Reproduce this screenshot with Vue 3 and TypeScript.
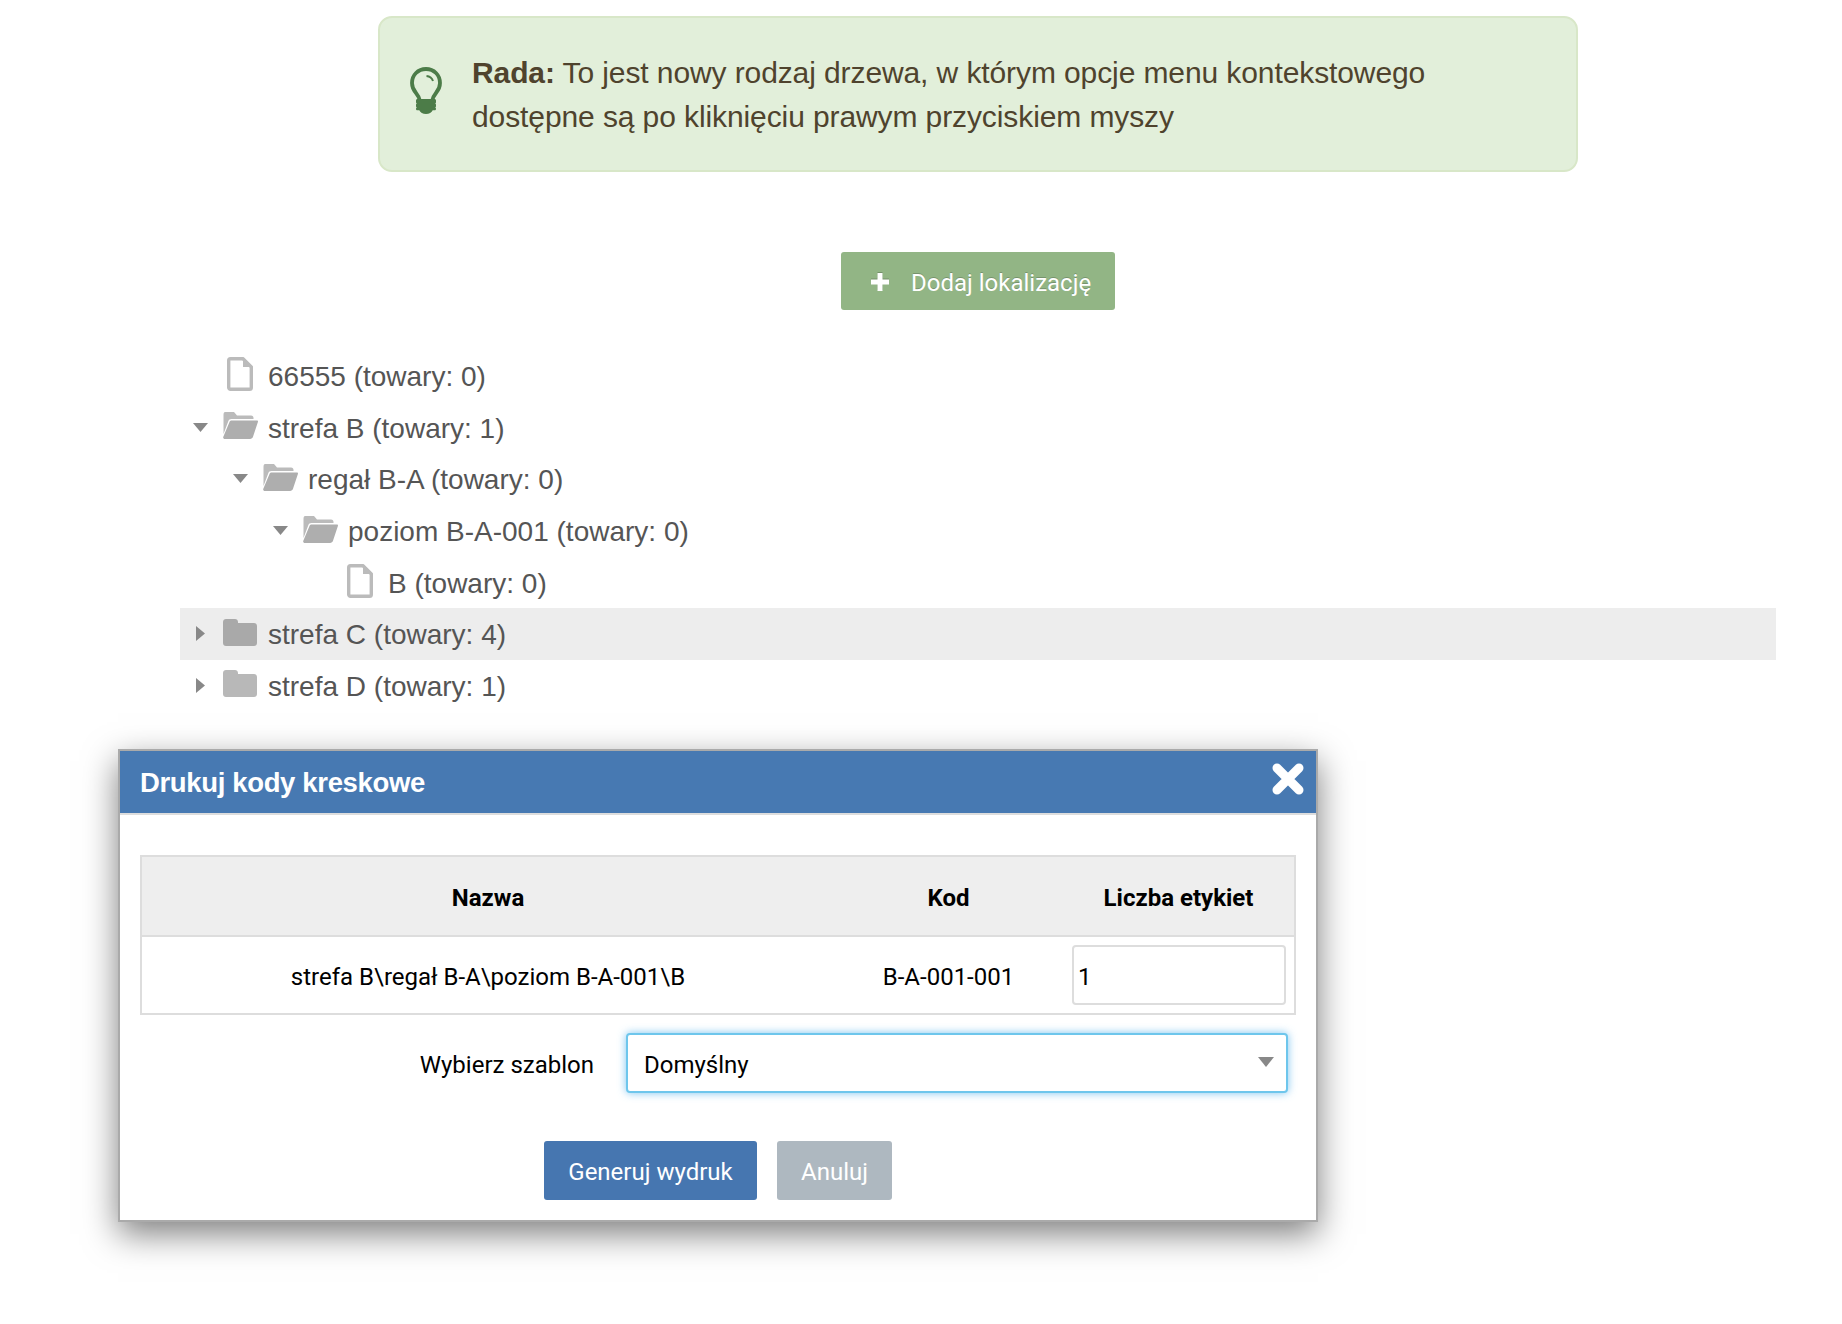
<script setup lang="ts">
interface TreeRow {
  label: string
  depth: number
  kind: 'file' | 'open' | 'closed'
  highlighted?: boolean
}

const rows: TreeRow[] = [
  { label: '66555 (towary: 0)', depth: 0, kind: 'file' },
  { label: 'strefa B (towary: 1)', depth: 0, kind: 'open' },
  { label: 'regał B-A (towary: 0)', depth: 1, kind: 'open' },
  { label: 'poziom B-A-001 (towary: 0)', depth: 2, kind: 'open' },
  { label: 'B (towary: 0)', depth: 3, kind: 'file' },
  { label: 'strefa C (towary: 4)', depth: 0, kind: 'closed', highlighted: true },
  { label: 'strefa D (towary: 1)', depth: 0, kind: 'closed' },
]

const indent = (depth: number) => ({ paddingLeft: `${depth * 40}px` })
</script>

<template>
  <div class="page">
    <div class="top">
      <div class="alert">
        <svg class="bulb" width="32" height="48" viewBox="0 0 32 48">
          <path d="M16 2C8 2 2 8 2 16c0 4 1.500 7 4 10 2 2.500 3.500 5 4 8h12c.5-3 2-5.500 4-8 2.500-3 4-6 4-10C30 8 24 2 16 2z" fill="none" stroke="#4c7c48" stroke-width="3.800" />
          <path d="M16.500 9c3 .3 5.500 2 6.500 5" fill="none" stroke="#4c7c48" stroke-width="2" />
          <path d="M7.500 32h17c.9 0 1.500.6 1.500 1.500v1.800c0 .6-.3 1-.8 1.200.5.200.8.600.8 1.200v1.600c0 .6-.3 1-.8 1.200.5.200.8.600.8 1.200 0 1-.6 1.500-1.500 1.500h-1.800c-1 2-3.500 3.800-6.700 3.800s-5.700-1.800-6.700-3.800H7.500c-.9 0-1.500-.5-1.500-1.500 0-.6.300-1 .8-1.200-.5-.2-.8-.6-.8-1.200v-1.600c0-.6.300-1 .8-1.200-.5-.2-.8-.6-.8-1.200v-1.800c0-.9.600-1.500 1.500-1.500z" fill="#4c7c48" />
        </svg>
        <p class="alert-text"><strong>Rada:</strong> To jest nowy rodzaj drzewa, w którym opcje menu kontekstowego dostępne są po kliknięciu prawym przyciskiem myszy</p>
      </div>
      <button class="add" type="button">
        <svg class="plus" width="18" height="18" viewBox="0 0 18 18">
          <path d="M6.500 0h5v6.500H18v5h-6.500V18h-5v-6.500H0v-5h6.500z" fill="#fff" />
        </svg>
        <span>Dodaj lokalizację</span>
      </button>
    </div>

    <ul class="tree">
      <li v-for="row in rows" :key="row.label" class="row" :class="{ hl: row.highlighted }">
        <div class="row-inner" :style="indent(row.depth)">
          <span class="caret">
            <svg v-if="row.kind === 'open'" width="15" height="9" viewBox="0 0 15 9"><path d="M0 0h15L7.500 9z" fill="#888" /></svg>
            <svg v-else-if="row.kind === 'closed'" width="9" height="15" viewBox="0 0 9 15"><path d="M0 0l9 7.500L0 15z" fill="#888" /></svg>
          </span>
          <span class="icon">
            <svg v-if="row.kind === 'file'" width="26" height="34" viewBox="0 0 26 34">
              <path d="M3.500 1.700H16L24.300 10v20.500a1.800 1.800 0 0 1-1.800 1.800h-19a1.800 1.800 0 0 1-1.800-1.800v-27a1.800 1.800 0 0 1 1.800-1.800z" fill="#fff" stroke="#bbb" stroke-width="3.400" stroke-linejoin="round" />
              <path d="M16 0l10 10H16z" fill="#bbb" />
            </svg>
            <svg v-else-if="row.kind === 'open'" width="36" height="27" viewBox="0 0 36 27">
              <path d="M3 0h9l3 3.500h14c1.700 0 2.500 1 2.500 2.500v1H9.500C7.800 7 6.800 7.800 6.300 9.200L1.500 22V3c0-1.700.6-3 1.500-3z" fill="#bbb" />
              <path d="M9.500 8.500H35c.8 0 1.200.7.900 1.400L31 24.800c-.5 1.300-1.500 2.200-3 2.200H3c-1.500 0-2.200-1-1.700-2.300L7.500 10c.4-1 1-1.500 2-1.500z" fill="#aeaeae" />
            </svg>
            <svg v-else width="34" height="27" viewBox="0 0 34 27">
              <path d="M3 0h9c1.700 0 3 1.300 3 3v1h16c1.700 0 3 1.300 3 3v17c0 1.700-1.300 3-3 3H3c-1.700 0-3-1.300-3-3V3c0-1.700 1.300-3 3-3z" :fill="row.highlighted ? '#a9a9a9' : '#b8b8b8'" />
            </svg>
          </span>
          <span class="label">{{ row.label }}</span>
        </div>
      </li>
    </ul>

    <section class="modal">
      <header class="modal-head">
        <h2>Drukuj kody kreskowe</h2>
        <svg class="close" width="34" height="34" viewBox="0 0 34 34">
          <path d="M6 6l22 22M28 6L6 28" stroke="#fff" stroke-width="9" stroke-linecap="round" fill="none" />
        </svg>
      </header>
      <div class="modal-body">
        <table class="codes">
          <thead>
            <tr>
              <th class="c1">Nazwa</th>
              <th class="c2">Kod</th>
              <th class="c3">Liczba etykiet</th>
            </tr>
          </thead>
          <tbody>
            <tr>
              <td>strefa B\regał B-A\poziom B-A-001\B</td>
              <td>B-A-001-001</td>
              <td class="input-cell"><input class="count" type="text" value="1" /></td>
            </tr>
          </tbody>
        </table>
        <div class="template">
          <label class="template-label" for="tpl">Wybierz szablon</label>
          <div class="select-wrap">
            <select id="tpl" class="select"><option>Domyślny</option></select>
            <svg class="select-caret" width="16" height="10" viewBox="0 0 16 10"><path d="M0 0h16L8 10z" fill="#888" /></svg>
          </div>
        </div>
        <div class="actions">
          <button class="btn primary" type="button">Generuj wydruk</button>
          <button class="btn muted" type="button">Anuluj</button>
        </div>
      </div>
    </section>
  </div>
</template>

<style scoped>
.page {
  position: relative;
  width: 1842px;
  height: 1324px;
  padding-top: 16px;
  box-sizing: border-box;
  font-family: "Liberation Sans", Arial, sans-serif;
  background: #fff;
}
.top {
  width: 1200px;
  margin-left: 378px;
  display: flex;
  flex-direction: column;
  align-items: center;
}
.alert {
  box-sizing: border-box;
  width: 100%;
  height: 156px;
  display: flex;
  align-items: center;
  padding-left: 30px;
  background: #e2efda;
  border: 2px solid #d8e7c8;
  border-radius: 14px;
}
.bulb {
  flex: none;
  margin-right: 30px;
  margin-top: -6px;
}
.alert-text {
  margin: 0;
  padding-top: 2px;
  width: 1000px;
  font-size: 30px;
  line-height: 44px;
  color: #4f432d;
  letter-spacing: -0.1px;
}
.add {
  margin-top: 80px;
  width: 274px;
  height: 58px;
  display: flex;
  align-items: center;
  padding: 0 0 0 30px;
  border: 0;
  border-radius: 3px;
  background: #92b585;
  color: #fff;
  font-family: Roboto, sans-serif;
  font-size: 24px;
  text-shadow: 0 -1px 0 rgba(0, 0, 0, 0.2);
}
.add span {
  padding-top: 4px;
}
.plus {
  margin-right: 22px;
  margin-top: 2px;
  filter: drop-shadow(0 -1px 0 rgba(0, 0, 0, 0.2));
}
.tree {
  list-style: none;
  margin: 40px 0 0 180px;
  padding: 0;
  width: 1596px;
}
.row {
  height: 51.6px;
}
.row.hl {
  background: #ededed;
}
.row-inner {
  height: 100%;
  display: flex;
  align-items: center;
  color: #555;
  font-size: 28px;
}
.label {
  padding-top: 3px;
}
.caret {
  width: 41px;
  flex: none;
  display: flex;
  justify-content: center;
  box-sizing: border-box;
}
.icon {
  width: 36px;
  flex: none;
  display: flex;
  justify-content: center;
  margin-left: 1px;
  margin-right: 10px;
  margin-top: -3px;
}
.modal {
  position: absolute;
  left: 118px;
  top: 749px;
  box-sizing: border-box;
  width: 1200px;
  height: 473px;
  background: #fff;
  border: 2px solid #aaa;
  box-shadow: 0 12px 32px rgba(0, 0, 0, 0.5);
}
.modal-head {
  height: 62px;
  display: flex;
  align-items: center;
  justify-content: space-between;
  background: #4779b2;
  border-bottom: 2px solid #ddd;
  padding: 0 11px 0 20px;
  box-sizing: content-box;
}
.modal-head h2 {
  margin: 0;
  padding-top: 2px;
  color: #fff;
  font-size: 27.5px;
  font-weight: 700;
  letter-spacing: -0.35px;
}
.close {
  margin-top: -6px;
}
.modal-body {
  padding: 40px 20px 0 20px;
  font-family: Roboto, sans-serif;
  color: #000;
  font-size: 24px;
}
.codes {
  width: 1156px;
  box-sizing: border-box;
  table-layout: fixed;
  border-collapse: separate;
  border-spacing: 0;
  border: 2px solid #ddd;
}
.codes th {
  height: 80px;
  padding: 3px 0 0;
  box-sizing: border-box;
  background: #eee;
  border-bottom: 2px solid #ddd;
  font-weight: 700;
  text-align: center;
}
.c1 { width: 692px; }
.c2 { width: 229px; }
.codes td {
  height: 76px;
  box-sizing: border-box;
  padding: 3px 0 0;
  text-align: center;
}
.codes .input-cell {
  text-align: left;
  padding: 0 0 0 9px;
}
.count {
  display: block;
  box-sizing: border-box;
  width: 214px;
  height: 60px;
  padding: 3px 4px 0;
  border: 2px solid #ddd;
  border-radius: 4px;
  font-family: inherit;
  font-size: 24px;
  color: #000;
  background: #fff;
}
.template {
  display: flex;
  align-items: center;
  margin-top: 18px;
}
.template-label {
  width: 454px;
  padding-top: 3px;
  text-align: right;
  margin-right: 32px;
  flex: none;
}
.select-wrap {
  position: relative;
  width: 662px;
}
.select {
  display: block;
  box-sizing: border-box;
  width: 100%;
  height: 60px;
  padding: 3px 16px 0;
  appearance: none;
  background: #fff;
  border: 2px solid #6ec6ec;
  border-radius: 4px;
  box-shadow: 0 0 9px rgba(82, 178, 236, 0.75);
  font-family: inherit;
  font-size: 24px;
  color: #000;
  outline: none;
}
.select-caret {
  position: absolute;
  right: 14px;
  top: 24px;
}
.actions {
  display: flex;
  margin-top: 48px;
  margin-left: 404px;
  gap: 20px;
}
.btn {
  height: 59px;
  border: 0;
  border-radius: 3px;
  color: #fff;
  font-family: inherit;
  font-size: 24px;
  padding: 2px 0 0;
}
.primary {
  width: 213px;
  background: #4676b0;
}
.muted {
  width: 115px;
  background: #aeb8c0;
}
</style>
